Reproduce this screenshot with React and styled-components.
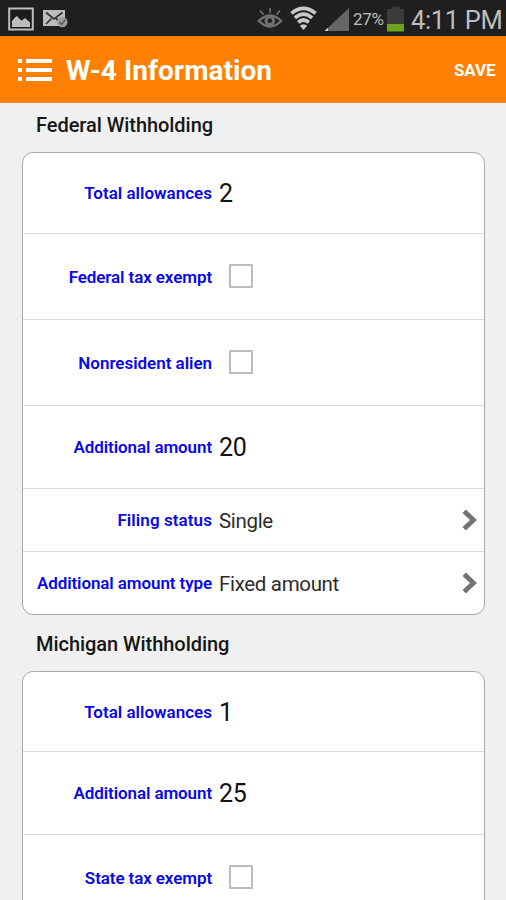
import React from "react";
import styled, { createGlobalStyle } from "styled-components";

const GlobalStyle = createGlobalStyle`
  *, *::before, *::after { box-sizing: border-box; }
  body { margin: 0; background: #f0f0f0; font-family: Roboto, sans-serif; overflow: hidden; }
`;

const Screen = styled.div`
  width: 506px;
  height: 900px;
  overflow: hidden;
  background: #f0f0f0;
`;

const StatusBar = styled.div`
  height: 36px;
  background: #1f1f1f;
  display: flex;
  justify-content: space-between;
`;

const StatusSvg = styled.svg`
  display: block;
  flex: none;
`;

const StatusGroup = styled.div`
  display: flex;
  height: 36px;
`;

const Battery = styled.span`
  width: 34px;
  white-space: nowrap;
  font-size: 17px;
  line-height: 38px;
  letter-spacing: -0.35px;
  color: #bebebe;
`;

const Clock = styled.time`
  width: 95px;
  white-space: nowrap;
  font-size: 25.5px;
  line-height: 40px;
  letter-spacing: -0.35px;
  color: #bebebe;
`;

const AppBar = styled.header`
  height: 67px;
  background: #ff8000;
  border-bottom: 1px solid #f58a24;
  display: flex;
  align-items: center;
  padding: 2px 10.5px 0 17px;
  color: #fff;
`;

const MenuIcon = styled.svg`
  display: block;
  width: 36px;
  height: 26px;
  margin-right: 13px;
`;

const Title = styled.h1`
  flex: 1;
  margin: 0;
  padding-top: 2px;
  font-size: 28px;
  font-weight: 700;
  line-height: 34px;
  letter-spacing: 0.05px;
`;

const SaveButton = styled.button`
  border: 0;
  padding: 0;
  background: none;
  color: #fff;
  font: 700 17px/20px Roboto, sans-serif;
  letter-spacing: -0.1px;
`;

const SectionTitle = styled.h2`
  height: ${(p) => p.$height}px;
  margin: 0;
  padding: ${(p) => p.$top}px 0 0 36px;
  font-size: 20px;
  font-weight: 500;
  line-height: 24px;
  letter-spacing: -0.05px;
  color: #161616;
`;

const Card = styled.section`
  margin: 0 21px 0 22px;
  border: 1px solid #a9a9a9;
  border-radius: 11px;
  background: #fff;
  overflow: hidden;
`;

const Row = styled.div`
  height: ${(p) => p.$height}px;
  display: flex;
  align-items: center;
  padding-right: 6px;
  border-bottom: 1px solid #dcdcdc;
  &:last-child { border-bottom: 0; }
`;

const Label = styled.span`
  width: 189px;
  text-align: right;
  white-space: nowrap;
  font-size: 17px;
  font-weight: 600;
  line-height: 20px;
  letter-spacing: ${(p) => p.$spacing ?? -0.1}px;
  color: #0808e8;
`;

const Value = styled.span`
  flex: 1;
  margin-left: 7px;
  padding-top: ${(p) => (p.$large ? 2 : 1)}px;
  font-size: ${(p) => (p.$large ? 25 : 20.5)}px;
  line-height: 30px;
  letter-spacing: ${(p) => (p.$large ? -0.3 : -0.33)}px;
  color: ${(p) => (p.$large ? "#111" : "#2c2c2c")};
`;

const CheckBox = styled.span`
  width: 24px;
  height: 24px;
  margin: 0 0 2px 17px;
  border: 2px solid #bcbcbc;
  border-radius: 1px;
  background: #fff;
`;

const Chevron = () => (
  <svg width="16" height="22" viewBox="0 0 16 22">
    <path d="M2.200 2.200L11.500 11L2.200 19.800" fill="none" stroke="#737373" strokeWidth="4.800" />
  </svg>
);

const federal = [
  { label: "Total allowances", value: "2", height: 81, large: true, spacing: 0 },
  { label: "Federal tax exempt", check: true, height: 86 },
  { label: "Nonresident alien", check: true, height: 86, spacing: -0.03 },
  { label: "Additional amount", value: "20", height: 83, large: true },
  { label: "Filing status", value: "Single", height: 63, link: true, spacing: 0.08 },
  { label: "Additional amount type", value: "Fixed amount", height: 62, link: true },
];

const michigan = [
  { label: "Total allowances", value: "1", height: 80, large: true, spacing: 0 },
  { label: "Additional amount", value: "25", height: 83, large: true },
  { label: "State tax exempt", check: true, height: 86 },
  { label: "", value: "", height: 86 },
];

const FormCard = ({ rows }) => (
  <Card>
    {rows.map((r, i) => (
      <Row key={i} $height={r.height}>
        <Label $spacing={r.spacing}>{r.label}</Label>
        {r.check ? <CheckBox /> : <Value $large={r.large}>{r.value}</Value>}
        {r.link && <Chevron />}
      </Row>
    ))}
  </Card>
);

const NotificationIcons = () => (
  <StatusSvg width="80" height="36" viewBox="0 0 80 36">
    <rect x="9.2" y="8.5" width="23.6" height="21" fill="#1b1b1b" stroke="#bdbdbd" strokeWidth="2" />
    <path d="M12 27V21L15 17.500L17 16L20 19.500L22 20.500L25 18L30 22.500V27Z" fill="#bdbdbd" />
    <rect x="43" y="10" width="22" height="16" fill="#bdbdbd" />
    <path d="M46 12.500L54 19L62.500 12.500M46 24L51.500 18.500M56 18.500L60 22" fill="none" stroke="#333" strokeWidth="1.700" />
    <circle cx="62.300" cy="22" r="5.200" fill="#9c9c9c" />
    <path d="M59.500 22L61.500 24.500L65.500 19.500" fill="none" stroke="#555" strokeWidth="1.300" />
  </StatusSvg>
);

const SignalIcons = () => (
  <StatusSvg width="98" height="36" viewBox="255 0 98 36">
    <g fill="none" stroke="#707070" strokeWidth="2.400">
      <path d="M258.800 21Q270 10 281.200 21Q270 32 258.800 21Z" />
      <path d="M270 8V13M260 10.500L263.500 14.500M280 10.500L276.500 14.500" strokeWidth="1.700" />
      <circle cx="269.800" cy="20.800" r="3.800" strokeWidth="3" />
    </g>
    <g fill="none" stroke="#c9c9c9" strokeWidth="3.700">
      <path d="M291.500 13.300Q303.500 3.300 315.500 13.300" />
      <path d="M294.900 17.900Q303.500 10.300 312.100 17.900" />
      <path d="M298.200 22.400Q303.500 17.500 308.800 22.400" />
    </g>
    <path d="M303.500 30L299.800 25.700Q303.500 22.700 307.200 25.700Z" fill="#c9c9c9" />
    <path d="M324.500 31L349 8V31Z" fill="#666" />
    <path d="M324.500 31L328 27.700V31Z" fill="#d0d0d0" />
  </StatusSvg>
);

const BatteryIcon = () => (
  <StatusSvg width="24" height="36" viewBox="387 0 24 36">
    <path d="M387 9H391.500V6.500H399.500V9H404V24H387Z" fill="#3b3b3b" />
    <rect x="387" y="24" width="17" height="7.500" fill="#6ba31b" />
  </StatusSvg>
);

export default function App() {
  return (
    <>
      <GlobalStyle />
      <Screen>
        <StatusBar>
          <NotificationIcons />
          <StatusGroup>
            <SignalIcons />
            <Battery>27%</Battery>
            <BatteryIcon />
            <Clock>4:11 PM</Clock>
          </StatusGroup>
        </StatusBar>
        <AppBar>
          <MenuIcon viewBox="0 0 36 26" fill="#fff">
            <path d="M1 2h4v4H1zM9 2h26v4H9zM1 11h4v4H1zM9 11h26v4H9zM1 20h4v4H1zM9 20h26v4H9z" />
          </MenuIcon>
          <Title>W-4 Information</Title>
          <SaveButton>SAVE</SaveButton>
        </AppBar>
        <SectionTitle $height={49} $top={10}>Federal Withholding</SectionTitle>
        <FormCard rows={federal} />
        <SectionTitle $height={56} $top={17}>Michigan Withholding</SectionTitle>
        <FormCard rows={michigan} />
      </Screen>
    </>
  );
}
